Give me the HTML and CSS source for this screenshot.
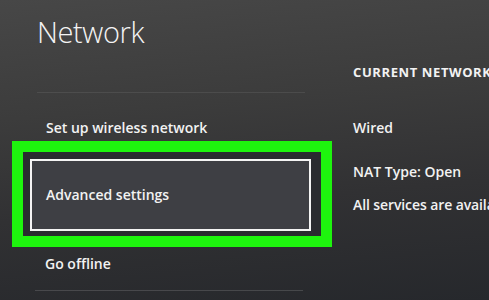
FILE: index.html
```html
<html>
<head>
<link rel="stylesheet" href="styles.css">
</head>
<body>
	<section class="network_screen">
		<div class="menu_column">
			<h1 class="screen_title">Network</h1>
			<div class="menu_divider"></div>
			<div class="menu_item">Set up wireless network</div>
			<div class="focus_ring">
				<div class="menu_item menu_item_selected">Advanced settings</div>
			</div>
			<div class="menu_item menu_item_last">Go offline</div>
			<div class="menu_divider menu_divider_bottom"></div>
		</div>
		<div class="status_column">
			<h2 class="status_heading">CURRENT NETWORK STATUS</h2>
			<p class="status_line status_wired">Wired</p>
			<p class="status_line status_nat">NAT Type: Open</p>
			<p class="status_line status_services">All services are available</p>
		</div>
	</section>
</body>
</html>
```

FILE: styles.css
```css
html, body{
	margin:0;
	padding:0;
	width:489px;
	height:300px;
	overflow:hidden;
	font-family: "Open Sans", "Noto Sans", sans-serif;
	color:#f2f2f2;
}
body{
	background: linear-gradient(175deg, #474747 0%, #3c3c3c 35%, #313133 65%, #26282c 100%);
}
.network_screen{
	display:flex;
	height:300px;
}
.menu_column{
	box-sizing:border-box;
	width:341px;
	flex:none;
	padding-top:13px;
	padding-left:12px;
}
.screen_title{
	margin:0 0 0 25px;
	font-size:29px;
	font-weight:300;
	letter-spacing:-.4px;
	line-height:37px;
	height:36px;
	color:#f4f4f4;
}
.menu_divider{
	margin:43px 0 0 25px;
	width:268px;
	height:1px;
	background:rgba(255,255,255,.08);
}
.menu_divider_bottom{
	margin:16px 0 0 23px;
	background:rgba(255,255,255,.14);
}
.menu_item{
	margin:25px 0 0 34px;
	font-size:14px;
	font-weight:600;
	line-height:20px;
	height:20px;
	white-space:nowrap;
}
.menu_item_last{
	margin-top:7px;
	margin-left:33px;
}
.focus_ring{
	box-sizing:border-box;
	width:320px;
	height:106px;
	margin-top:3px;
	border:11px solid #1ef40e;
	padding:7px 10px 4px 7px;
	background:#2a2b30;
}
.menu_item.menu_item_selected{
	box-sizing:border-box;
	display:flex;
	align-items:center;
	margin:0;
	height:72px;
	padding-left:14px;
	border:2px solid #f4f4f4;
	background:#3e3f44;
}
.status_column{
	padding-left:12px;
	padding-top:62px;
	white-space:nowrap;
}
.status_heading{
	margin:0;
	font-size:13px;
	font-weight:700;
	letter-spacing:.6px;
	line-height:20px;
}
.status_line{
	margin:0;
	font-size:14px;
	font-weight:600;
	line-height:20px;
}
.status_wired{
	margin-top:36px;
}
.status_nat{
	margin-top:24px;
}
.status_services{
	margin-top:13px;
	letter-spacing:-.1px;
}
```
